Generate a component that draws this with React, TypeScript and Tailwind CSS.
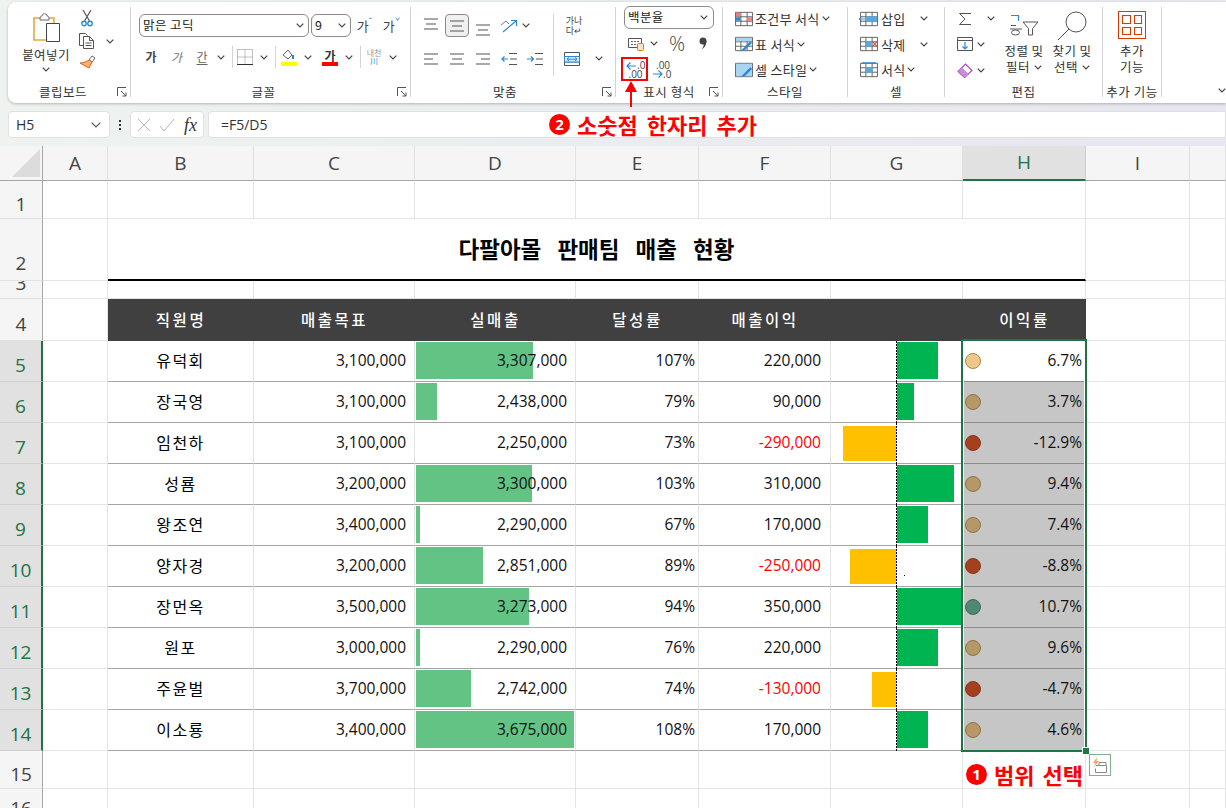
import type { ReactNode } from 'react'

const blue = '#2b88d8'

function Chev({ className = '' }: { className?: string }) {
  return (
    <svg width="8" height="5" viewBox="0 0 8 5" className={className}>
      <path d="M.7.7 4 4 7.3.7" fill="none" stroke="#444" strokeWidth="1.2" />
    </svg>
  )
}

function Slot({ w, children, className = '' }: { w: number; children?: ReactNode; className?: string }) {
  return (
    <div className={`flex items-center justify-center shrink-0 h-full ${className}`} style={{ width: w }}>
      {children}
    </div>
  )
}

function Launcher() {
  return (
    <svg width="10" height="10" viewBox="0 0 10 10" className="absolute right-[3px] bottom-[0px]">
      <path d="M.5 9V.5H9M4 4l5 5M9 5.500V9H5.500" fill="none" stroke="#555" strokeWidth="1" />
    </svg>
  )
}

function Group({ w, label, launcher, labelPr = 0, children }: { w: number; label: string; launcher?: boolean; labelPr?: number; children: ReactNode }) {
  return (
    <div className="relative flex flex-col shrink-0 h-[90px] border-r border-[#d4d4d4]" style={{ width: w }}>
      <div className="h-[78px]">{children}</div>
      <div className="h-[12px] leading-[14px] text-center text-[12.500px] tracking-[0.5px] text-[#333] whitespace-nowrap" style={{ paddingRight: labelPr }}>{label}</div>
      {launcher && <Launcher />}
    </div>
  )
}

function Lines({ ys, xs }: { ys: number[]; xs: [number, number][] }) {
  return (
    <svg width="18" height="20" viewBox="0 0 18 20">
      {ys.map((y, i) => (
        <path key={i} d={`M${xs[i][0]} ${y}H${xs[i][1]}`} stroke="#555" strokeWidth="1.1" />
      ))}
    </svg>
  )
}

function Indent({ right }: { right?: boolean }) {
  return (
    <svg width="16" height="14" viewBox="0 0 16 14">
      <path d="M8 1.500h8M9 7h7M8 12.500h8" stroke="#555" strokeWidth="1.1" />
      <path d={right ? 'M0 7h6M4 4.500 6.500 7 4 9.500' : 'M1 7h6M3.500 4.500 1 7l2.500 2.500'} fill="none" stroke={blue} strokeWidth="1.2" />
    </svg>
  )
}

function MenuRow({ icon, label, chevW, iconW, pl, textW }: { icon: ReactNode; label: string; chevW?: number; iconW: number; pl: number; textW?: number }) {
  return (
    <div className="flex items-center h-[25.500px]" style={{ paddingLeft: pl }}>
      <Slot w={iconW}>{icon}</Slot>
      <span className="text-[13px] tracking-[0.3px] leading-none text-[#333] whitespace-nowrap" style={textW ? { width: textW } : undefined}>{label}</span>
      {chevW !== undefined && <Slot w={chevW}><Chev /></Slot>}
    </div>
  )
}

function GridIcon({ children }: { children?: ReactNode }) {
  return (
    <svg width="20" height="16" viewBox="0 0 22 18">
      <path d="M1.500 1.500h19v15h-19zM1.500 6.500h19M1.500 11.500h19M7.500 1.500v15M14.500 1.500v15" fill="none" stroke="#555" strokeWidth="1" />
      {children}
    </svg>
  )
}

function Ribbon() {
  return (
    <div className="flex ml-2 h-[101px] pt-[5px] rounded-l-lg bg-white shadow-[0_1px_3px_rgba(0,0,0,0.25)] overflow-hidden">
      <Group w={123} label="클립보드" launcher labelPr={12}>
        <div className="flex pl-[14px]">
          <div className="flex flex-col items-center w-[48px]">
            <svg width="30" height="30" viewBox="0 0 30 30" className="mt-[5px]">
              <path d="M3 6h20v22H3z" fill="#fff" stroke="#e9a63f" strokeWidth="1.6" />
              <path d="M9 6c0-2 2-2 2-2 0-3 5-3 5 0 0 0 2 0 2 2v2H9z" fill="#fff" stroke="#666" strokeWidth="1" />
              <path d="M15.500 11.500h13v18h-13z" fill="#fff" stroke="#444" strokeWidth="1" />
            </svg>
            <span className="mt-[5px] text-[12.500px] tracking-[0.4px] leading-[16px] text-[#333] whitespace-nowrap">붙여넣기</span>
            <Chev className="mt-[4px]" />
          </div>
          <div className="flex flex-col items-start w-[54px]">
            <Slot w={34} className="!h-[17px] mt-[3px]">
              <svg width="12" height="17" viewBox="0 0 12 17">
                <path d="M2 0l6.500 11M10 0 3.500 11" stroke="#555" strokeWidth="1.2" />
                <circle cx="3" cy="13.500" r="2.200" fill="none" stroke={blue} strokeWidth="1.400" />
                <circle cx="9" cy="13.500" r="2.200" fill="none" stroke={blue} strokeWidth="1.400" />
              </svg>
            </Slot>
            <div className="flex items-center mt-[6px] w-[54px]">
              <Slot w={34}>
                <svg width="16" height="16" viewBox="0 0 16 16">
                  <path d="M4.500 12.500H.5V.5h6l2 2" fill="none" stroke="#555" />
                  <path d="M4.500 3.500h6l4 4v8h-10z M10.500 3.500v4h4M6.500 10h6M6.500 12.500h6" fill="#fff" stroke="#555" />
                </svg>
              </Slot>
              <Slot w={12}><Chev /></Slot>
            </div>
            <Slot w={34} className="!h-[16px] mt-[5px]">
              <svg width="17" height="16" viewBox="0 0 17 16">
                <path d="M10 6l3-4 3 2-3 4z" fill="none" stroke="#666" />
                <path d="M10 6l3 2-3 6-9-5c3 0 6-1 9-3z" fill="#f6b26b" stroke="#d9641e" />
              </svg>
            </Slot>
          </div>
        </div>
      </Group>

      <Group w={280} label="글꼴" launcher labelPr={14}>
        <div className="pl-[8px] pt-[7px]">
          <div className="flex items-center h-[23px]">
            <div className="flex items-center justify-between w-[170px] h-[23px] pl-[3px] pr-[4px] border border-[#8a8a8a] rounded-md text-[12.500px] tracking-[0.4px] text-[#222]">
              <span>맑은 고딕</span>
              <Chev />
            </div>
            <div className="flex items-center justify-between w-[40px] h-[23px] ml-[2px] pl-[3px] pr-[4px] border border-[#8a8a8a] rounded-md text-[12.500px] text-[#222]">
              <span>9</span>
              <Chev />
            </div>
            <Slot w={27} className="text-[13px] text-[#444]">가<span className="text-[9px] text-[#2b88d8] -mt-[7px]">ˆ</span></Slot>
            <Slot w={27} className="text-[13px] text-[#444]">가<span className="text-[9px] text-[#2b88d8] -mt-[7px]">ˇ</span></Slot>
          </div>
          <div className="flex items-center h-[24px] mt-[8px] text-[12px] text-[#444]">
            <Slot w={24} className="font-bold">가</Slot>
            <Slot w={27} className="italic text-[#777]">가</Slot>
            <Slot w={24}><span className="underline underline-offset-2 text-[#666]">간</span></Slot>
            <Slot w={14}><Chev /></Slot>
            <div className="w-px h-[22px] ml-[4px] bg-[#d4d4d4]" />
            <Slot w={24}>
              <svg width="16" height="16" viewBox="0 0 16 16">
                <path d="M.5.5h15M.5 8h15M8 .5v15M.5.5v15M15.500.5v15" fill="none" stroke="#888" strokeDasharray="1 1" />
                <path d="M0 15.500h16" stroke="#333" />
              </svg>
            </Slot>
            <Slot w={14}><Chev /></Slot>
            <div className="w-px h-[22px] ml-[4px] bg-[#d4d4d4]" />
            <Slot w={26}>
              <svg width="16" height="18" viewBox="0 0 16 18">
                <path d="M2 7l5-5 4 5-4 4z" fill="#fff" stroke="#666" />
                <path d="M12 11V7" stroke={blue} strokeWidth="2" />
                <path d="M0 14h16v4H0z" fill="#ffff00" />
              </svg>
            </Slot>
            <Slot w={12}><Chev /></Slot>
            <Slot w={4} />
            <Slot w={24}>
              <div className="flex flex-col items-center leading-[13px] font-bold text-[#333]">
                가
                <div className="w-[16px] h-[4px] bg-[#ff0000]" />
              </div>
            </Slot>
            <Slot w={14}><Chev /></Slot>
            <div className="w-px h-[22px] ml-[4px] bg-[#d4d4d4]" />
            <Slot w={26} className="flex-col text-[8px] leading-[8px] text-[#999]">
              내천
              <span className="text-[#2b88d8]">川</span>
            </Slot>
            <Slot w={12}><Chev /></Slot>
          </div>
        </div>
      </Group>

      <Group w={205} label="맞춤" launcher labelPr={16}>
        <div className="flex pl-[7px] pt-[7px]">
          <div>
            <div className="flex items-center h-[23px]">
              <Slot w={26}><Lines ys={[3, 8, 13]} xs={[[2, 16], [4, 14], [2, 16]]} /></Slot>
              <Slot w={26}>
                <div className="flex items-center justify-center w-[24px] h-[23px] rounded bg-[#f0f0f0] border border-[#8a8a8a]">
                  <Lines ys={[5, 10, 15]} xs={[[2, 16], [4, 14], [2, 16]]} />
                </div>
              </Slot>
              <Slot w={26}><Lines ys={[9, 14, 19]} xs={[[2, 16], [4, 14], [2, 16]]} /></Slot>
              <Slot w={26}>
                <svg width="18" height="14" viewBox="0 0 18 14">
                  <path d="M1 6l5-4 3 3" fill="none" stroke="#777" />
                  <path d="M3 13 16 2M11 1.500h5.500V7" fill="none" stroke={blue} strokeWidth="1.2" />
                </svg>
              </Slot>
              <Slot w={8}><Chev /></Slot>
            </div>
            <div className="flex items-center h-[23px] mt-[10px]">
              <Slot w={26}><Lines ys={[5, 10, 15]} xs={[[2, 16], [2, 11], [2, 16]]} /></Slot>
              <Slot w={26}><Lines ys={[5, 10, 15]} xs={[[2, 16], [4, 14], [2, 16]]} /></Slot>
              <Slot w={26}><Lines ys={[5, 10, 15]} xs={[[2, 16], [7, 16], [2, 16]]} /></Slot>
              <Slot w={26}><Indent /></Slot>
              <Slot w={26}><Indent right /></Slot>
            </div>
          </div>
          <div className="w-px h-[62px] ml-[5px] bg-[#d4d4d4]" />
          <div className="flex flex-col pl-[10px]">
            <div className="flex items-center justify-center w-[18px] h-[23px] ml-[1px] text-[9px] leading-[10px] text-[#444] text-center">가나<br />다↵</div>
            <div className="flex items-center h-[23px] mt-[10px]">
              <svg width="16" height="14" viewBox="0 0 16 14">
                <path d="M.5.5h15v13H.5zM.5 4.500h15M.5 10h15" fill="#fff" stroke="#555" />
                <path d="M.5 4.500h15V10H.5z" fill="#d6ecfa" stroke={blue} />
                <path d="M3 7.200h10M5 5.400 3 7.200 5 9M11 5.400l2 1.800L11 9" fill="none" stroke={blue} />
              </svg>
              <Chev className="ml-[15px]" />
            </div>
          </div>
        </div>
      </Group>

      <Group w={107} label="표시 형식" launcher>
        <div className="pl-[8px]">
          <div className="flex items-center justify-between w-[90px] h-[23px] pl-[3px] pr-[5px] border border-[#8a8a8a] rounded-md text-[12.500px] tracking-[0.4px] text-[#222] -mt-[1px]">
            <span>백분율</span>
            <Chev />
          </div>
          <div className="flex items-center h-[25px] mt-[2px]">
            <Slot w={24}>
              <svg width="16" height="14" viewBox="0 0 16 14">
                <path d="M.5 1.500h13v9H.5z" fill="#fff" stroke="#555" />
                <path d="M3 4.500h8M3 7.500h8" stroke="#666" strokeDasharray="2 1" />
                <rect x="9.500" y="6.500" width="6" height="7" rx="1" fill="#fde3c4" stroke="#e07b1a" />
              </svg>
            </Slot>
            <Slot w={12}><Chev /></Slot>
            <Slot w={34} className="text-[20px] font-light text-[#444] font-['Open_Sans',sans-serif]">%</Slot>
            <Slot w={18}>
              <svg width="8" height="13" viewBox="0 0 8 13">
                <circle cx="4" cy="4" r="3.500" fill="#444" />
                <path d="M7.500 4c0 4-2 7-5 8.500C4.500 10 5 8 4.500 7z" fill="#444" />
              </svg>
            </Slot>
          </div>
          <div className="flex items-center h-[25px] mt-[1px]">
            <Slot w={24}>
              <svg width="20" height="19" viewBox="0 0 20 19">
                <path d="M1 6h9M4.500 2.500 1 6l3.500 3.500" fill="none" stroke={blue} strokeWidth="1.2" />
                <text x="11" y="9" fontSize="10" fill="#444" fontFamily="Open Sans">.0</text>
                <text x="2.500" y="18" fontSize="10" fill="#444" fontFamily="Open Sans">.00</text>
              </svg>
            </Slot>
            <Slot w={2} />
            <Slot w={24}>
              <svg width="20" height="19" viewBox="0 0 20 19">
                <text x="4" y="9" fontSize="10" fill="#444" fontFamily="Open Sans">.00</text>
                <path d="M1 14h9M6.500 10.500 10 14l-3.500 3.500" fill="none" stroke={blue} strokeWidth="1.2" />
                <text x="11" y="18" fontSize="10" fill="#444" fontFamily="Open Sans">.0</text>
              </svg>
            </Slot>
          </div>
        </div>
      </Group>

      <Group w={125} label="스타일">
        <div className="-mt-[1px]">
          <MenuRow pl={10} iconW={22} label="조건부 서식" chevW={12} icon={<GridIcon><path d="M2 2h5v4H2zM15 7h5v4h-5z" fill="#f47c7c" /><path d="M2 7h5v4H2z" fill={blue} /></GridIcon>} />
          <MenuRow pl={10} iconW={22} label="표 서식" chevW={12} icon={<GridIcon><path d="M2 2h18v4H2z" fill="#a9d4f2" /><path d="M8 16l10-10 2 2-9 9z" fill={blue} /></GridIcon>} />
          <MenuRow pl={10} iconW={22} label="셀 스타일" chevW={12} icon={<GridIcon><path d="M2 2h18v14H2z" fill="#a9d4f2" /><path d="M8 16l10-10 2 2-9 9z" fill={blue} /></GridIcon>} />
        </div>
      </Group>

      <Group w={97} label="셀">
        <div className="-mt-[1px]">
          <MenuRow pl={9} iconW={24} label="삽입" textW={39} chevW={8} icon={<GridIcon><path d="M8 6h12v6H8z" fill="#5ba7e0" /><path d="M0 9h8M3 6 0 9l3 3" fill="none" stroke={blue} /></GridIcon>} />
          <MenuRow pl={9} iconW={24} label="삭제" textW={39} chevW={8} icon={<GridIcon><path d="M7 6h7v6H7z" fill="#5ba7e0" /><path d="M15 6l5 6M20 6l-5 6" stroke="#e8503a" strokeWidth="1.200" /></GridIcon>} />
          <MenuRow pl={9} iconW={24} label="서식" textW={26} chevW={8} icon={<GridIcon><path d="M7 6h8v6H7z" fill="#5ba7e0" /><path d="M3 1h16" stroke={blue} strokeWidth="1.500" /></GridIcon>} />
        </div>
      </Group>

      <Group w={158} label="편집">
        <div className="flex pl-[8px]">
          <div className="w-[48px] -mt-[1px]">
            <div className="flex items-center h-[25px]">
              <Slot w={24} className="text-[#555]">
                <svg width="14" height="14" viewBox="0 0 14 14"><path d="M13 1.500H1.500L7 7l-5.500 5.500H13" fill="none" stroke="#555" /></svg>
              </Slot>
              <Slot w={22} className="pl-[5px]"><Chev /></Slot>
            </div>
            <div className="flex items-center h-[26px]">
              <Slot w={24}>
                <svg width="16" height="14" viewBox="0 0 16 14">
                  <path d="M.5.5h15v13H.5zM.5 3.500h15" fill="#fff" stroke="#555" />
                  <path d="M8 5v7M5.500 9.500 8 12l2.500-2.500" fill="none" stroke={blue} strokeWidth="1.200" />
                </svg>
              </Slot>
              <Slot w={8}><Chev /></Slot>
            </div>
            <div className="flex items-center h-[26px]">
              <Slot w={24}>
                <svg width="16" height="15" viewBox="0 0 16 15">
                  <path d="M1 8.500 8.500 1 15 7.500 7.500 14.500z" fill="#fff" stroke="#a64fb8" strokeWidth="1.200" />
                  <path d="M1 8.500 5 4.500 11.500 11 7.500 14.500z" fill="#c98ad6" />
                </svg>
              </Slot>
              <Slot w={8}><Chev /></Slot>
            </div>
          </div>
          <div className="flex flex-col items-center w-[48px] ml-[-1px]">
            <svg width="30" height="22" viewBox="0 0 30 22" className="mt-[7px]">
              <path d="M2 1.500h7.500V7" fill="none" stroke={blue} strokeWidth="1.200" />
              <path d="M7 11.500h-5M1 15h12" fill="none" stroke="#555" />
              <ellipse cx="6.500" cy="18.500" rx="4" ry="2.500" fill="none" stroke="#555" />
              <path d="M14 8h15l-5.500 6.500V21h-4v-6.500z" fill="#fff" stroke="#555" />
            </svg>
            <span className="mt-[7px] text-[12.500px] tracking-[0.4px] leading-[16px] text-[#333] whitespace-nowrap">정렬 및</span>
            <span className="flex items-center gap-[4px] text-[12.500px] tracking-[0.4px] leading-[16px] text-[#333] whitespace-nowrap">필터<Chev /></span>
          </div>
          <div className="flex flex-col items-center w-[48px]">
            <svg width="30" height="30" viewBox="0 0 30 30" className="mt-[4px]">
              <circle cx="19" cy="11" r="10" fill="#fff" stroke="#555" />
              <path d="M12 18 1 29" stroke="#555" />
            </svg>
            <span className="mt-[2px] text-[12.500px] tracking-[0.4px] leading-[16px] text-[#333] whitespace-nowrap">찾기 및</span>
            <span className="flex items-center gap-[4px] text-[12.500px] tracking-[0.4px] leading-[16px] text-[#333] whitespace-nowrap">선택<Chev /></span>
          </div>
        </div>
      </Group>

      <Group w={59} label="추가 기능">
        <div className="flex flex-col items-center">
          <div className="grid grid-cols-2 gap-[3px] w-[28px] h-[28px] mt-[4px] p-[3px] border border-[#d83b01]">
            <div className="border border-[#d83b01]" />
            <div className="border border-[#d83b01]" />
            <div className="border border-[#d83b01]" />
            <div className="border border-[#d83b01]" />
          </div>
          <span className="mt-[4px] text-[12.500px] tracking-[0.4px] leading-[16px] text-[#333]">추가</span>
          <span className="text-[12.500px] tracking-[0.4px] leading-[16px] text-[#333]">기능</span>
        </div>
      </Group>

      <div className="flex flex-1 items-end justify-end pr-[0px] pb-[10px]">
        <Chev />
      </div>
    </div>
  )
}

function FormulaBar() {
  return (
    <div className="flex items-center h-[27px] mt-[8px] ml-2">
      <div className="flex items-center justify-between w-[102px] h-[27px] pl-[7px] pr-[8px] bg-white rounded border border-[#e0e0e0] text-[14px] text-[#333] font-['Open_Sans',sans-serif]">
        H5
        <svg width="10" height="6" viewBox="0 0 10 6"><path d="M.7.7 5 5 9.300.7" fill="none" stroke="#555" strokeWidth="1.200" /></svg>
      </div>
      <div className="flex flex-col items-center justify-center gap-[2px] w-[20px] h-[27px]">
        <div className="w-[2px] h-[2px] bg-[#333]" />
        <div className="w-[2px] h-[2px] bg-[#333]" />
        <div className="w-[2px] h-[2px] bg-[#333]" />
      </div>
      <div className="flex items-center w-[74px] h-[27px] pl-[6px] bg-white rounded border border-[#e0e0e0]">
        <svg width="14" height="14" viewBox="0 0 14 14"><path d="M1 1l12 12M13 1 1 13" stroke="#bbb" /></svg>
        <svg width="16" height="14" viewBox="0 0 16 14" className="ml-[8px]"><path d="M1 8l4 5L15 1" fill="none" stroke="#bbb" /></svg>
        <span className="ml-[9px] text-[18px] leading-none italic text-[#333] font-['Liberation_Serif',serif]">fx</span>
      </div>
      <div className="flex items-center flex-1 h-[27px] ml-[4px] pl-[12px] bg-white rounded-l border border-[#e0e0e0] text-[14px] text-[#333] font-['Open_Sans',sans-serif]">
        =F5/D5
      </div>
    </div>
  )
}

const numFont = "font-['Open_Sans','Noto_Sans_CJK_KR',sans-serif]"
const line = 'border-r border-b border-[#e4e4e4]'
const colNames = ['A', 'B', 'C', 'D', 'E', 'F', 'G', 'H', 'I', '']

type Row = {
  n: number
  name: string
  goal: string
  sales: string
  bar: number
  rate: string
  profit: string
  neg?: boolean
  gbar: number
  yellow?: boolean
  pct: string
  dot: string
}

const rows: Row[] = [
  { n: 5, name: '유덕회', goal: '3,100,000', sales: '3,307,000', bar: 117, rate: '107%', profit: '220,000', gbar: 41, pct: '6.7%', dot: 'bg-[#f0c78a] border-[#ad8a45]' },
  { n: 6, name: '장국영', goal: '3,100,000', sales: '2,438,000', bar: 21, rate: '79%', profit: '90,000', gbar: 17, pct: '3.7%', dot: 'bg-[#b59768] border-[#8f7445]' },
  { n: 7, name: '임천하', goal: '3,100,000', sales: '2,250,000', bar: 0, rate: '73%', profit: '-290,000', neg: true, gbar: 53, yellow: true, pct: '-12.9%', dot: 'bg-[#a5401f] border-[#84371e]' },
  { n: 8, name: '성룜', goal: '3,200,000', sales: '3,300,000', bar: 116, rate: '103%', profit: '310,000', gbar: 57, pct: '9.4%', dot: 'bg-[#b59768] border-[#8f7445]' },
  { n: 9, name: '왕조연', goal: '3,400,000', sales: '2,290,000', bar: 4, rate: '67%', profit: '170,000', gbar: 31, pct: '7.4%', dot: 'bg-[#b59768] border-[#8f7445]' },
  { n: 10, name: '양자경', goal: '3,200,000', sales: '2,851,000', bar: 67, rate: '89%', profit: '-250,000', neg: true, gbar: 46, yellow: true, pct: '-8.8%', dot: 'bg-[#a5401f] border-[#84371e]' },
  { n: 11, name: '장먼옥', goal: '3,500,000', sales: '3,273,000', bar: 113, rate: '94%', profit: '350,000', gbar: 65, pct: '10.7%', dot: 'bg-[#4f8774] border-[#3f6c5c]' },
  { n: 12, name: '원포', goal: '3,000,000', sales: '2,290,000', bar: 4, rate: '76%', profit: '220,000', gbar: 41, pct: '9.6%', dot: 'bg-[#b59768] border-[#8f7445]' },
  { n: 13, name: '주윤벌', goal: '3,700,000', sales: '2,742,000', bar: 55, rate: '74%', profit: '-130,000', neg: true, gbar: 24, yellow: true, pct: '-4.7%', dot: 'bg-[#a5401f] border-[#84371e]' },
  { n: 14, name: '이소룡', goal: '3,400,000', sales: '3,675,000', bar: 158, rate: '108%', profit: '170,000', gbar: 31, pct: '4.6%', dot: 'bg-[#b59768] border-[#8f7445]' },
]

function RowHead({ n, selected, children }: { n?: number; selected?: boolean; children?: ReactNode }) {
  return (
    <div
      className={`flex justify-center items-center pt-[9px] overflow-hidden text-[19px] ${numFont} ${
        selected
          ? 'bg-[#e1e1e1] text-[#217346] border-r-2 border-r-[#217346] border-b border-b-[#cfcfcf]'
          : 'bg-[#f5f5f5] text-[#444] border-r border-r-[#a6a6a6] border-b border-b-[#e1e1e1]'
      }`}
    >
      {children ?? n}
    </div>
  )
}

function Blank({ count }: { count: number }) {
  return (
    <>
      {Array.from({ length: count }).map((_, i) => (
        <div key={i} className={line} />
      ))}
    </>
  )
}

function DataRow({ r }: { r: Row }) {
  const cell = 'flex items-center border-r border-r-[#e4e4e4] border-b border-b-[#a6a6a6] text-[15.500px] text-[#111]'
  return (
    <>
      <RowHead n={r.n} selected />
      <div className={line} />
      <div className={`${cell} justify-center pb-[3px] text-[16px] tracking-[1.500px] text-black`}>{r.name}</div>
      <div className={`${cell} justify-end pr-[8px] ${numFont}`}>{r.goal}</div>
      <div className={`${cell} relative justify-end pr-[8px] ${numFont}`}>
        {r.bar > 0 && <div className="absolute left-px top-px bottom-[2px] bg-[#63c384]" style={{ width: r.bar }} />}
        <span className="relative">{r.sales}</span>
      </div>
      <div className={`${cell} justify-end pr-[3px] ${numFont}`}>{r.rate}</div>
      <div className={`${cell} justify-end pr-[9px] ${numFont} ${r.neg ? 'text-[#ff0000]' : ''}`}>{r.profit}</div>
      <div className={`${cell} relative`}>
        {r.yellow ? (
          <div className="absolute right-[66px] top-[3px] bottom-[2px] bg-[#ffc000]" style={{ width: r.gbar }} />
        ) : (
          <div className="absolute left-[66px] top-px bottom-[2px] bg-[#00b551]" style={{ width: r.gbar }} />
        )}
        <div className="absolute left-[65px] top-0 -bottom-px w-px bg-[repeating-linear-gradient(to_bottom,#000_0px,#000_2px,transparent_2px,transparent_3px)]" />
        {r.n === 10 && <div className="absolute left-[73px] top-[29px] w-px h-px bg-black" />}
      </div>
      <div className="border-r border-r-[#e4e4e4] px-px bg-white">
        <div className={`flex items-center justify-between h-full pl-[1px] pr-[2px] text-[15.500px] text-[#111] border-b border-b-[#8c8c8c] ${numFont} ${r.n === 5 ? 'bg-white' : 'bg-[#c6c6c6]'}`}>
          <div className={`w-[16px] h-[16px] rounded-full border ${r.dot}`} />
          {r.pct}
        </div>
      </div>
      <Blank count={2} />
    </>
  )
}

function Sheet() {
  const headCell = 'flex items-center justify-center bg-[#404040] text-white text-[15.500px] tracking-[2.500px] font-medium'
  return (
    <div className="relative mt-[8px] grid grid-cols-[43px_65px_146px_161px_161px_123px_132px_132px_123px_104px_36px] grid-rows-[35px_38px_62px_18px_42px_repeat(10,41px)_38px_30px] bg-white">
      <div className="flex items-end justify-end pr-[2px] pb-[3px] bg-[#f5f5f5] border-r border-b border-[#a6a6a6]">
        <svg width="28" height="28" viewBox="0 0 28 28"><path d="M28 0v28H0z" fill="#dcdcdc" /></svg>
      </div>
      {colNames.map((c, i) => (
        <div
          key={i}
          className={`flex items-center justify-center text-[19px] ${numFont} ${
            c === 'H'
              ? 'bg-[#e1e1e1] text-[#217346] border-b-2 border-b-[#217346] border-r border-r-[#cfcfcf]'
              : 'bg-[#f5f5f5] text-[#444] border-b border-b-[#a6a6a6] border-r border-r-[#e1e1e1]'
          }`}
        >
          {c}
        </div>
      ))}

      <RowHead n={1} />
      <Blank count={10} />

      <RowHead>
        <span className="pt-[18px]">2</span>
      </RowHead>
      <div className={line} />
      <div className="col-span-7 flex items-center justify-center pt-[1px] pb-[2px] border-b-2 border-b-black border-r border-r-[#e4e4e4] text-[22.500px] [word-spacing:11px] font-bold text-black">
        다팔아몰 판매팀 매출 현황
      </div>
      <Blank count={2} />

      <RowHead>
        <span className="-mt-[21px]">3</span>
      </RowHead>
      <Blank count={10} />

      <RowHead n={4} />
      <div className={line} />
      <div className={headCell}>직원명</div>
      <div className={headCell}>매출목표</div>
      <div className={headCell}>실매출</div>
      <div className={headCell}>달성률</div>
      <div className={headCell}>매출이익</div>
      <div className={headCell} />
      <div className={headCell}>이익률</div>
      <Blank count={2} />

      {rows.map((r) => (
        <DataRow key={r.n} r={r} />
      ))}

      <RowHead n={15} />
      <Blank count={10} />
      <RowHead n={16} />
      <Blank count={10} />

      {/* selection box over H5:H14 */}
      <div className="absolute left-[961px] top-[193px] w-[126px] h-[413px] border-2 border-[#217346] pointer-events-none" />
      <div className="absolute left-[1083px] top-[602px] w-[6px] h-[6px] bg-[#217346] outline outline-1 outline-white" />
      <div className="absolute left-[1089px] top-[608px] flex items-center justify-center w-[22px] h-[22px] bg-white border border-[#7fb08f]">
        <svg width="16" height="16" viewBox="0 0 16 16">
          <path d="M5 0 1 6h2.500L2 10l5-6H4.500z" fill="#f2a65a" />
          <path d="M7 5.500h7v3H7zM4 8.500h10M3.500 11.500v4h11v-7" fill="none" stroke="#888" />
        </svg>
      </div>
      <div className="absolute left-[966px] top-[615px] flex items-center gap-[7px] h-[26px] whitespace-nowrap text-[22px] [word-spacing:3px] font-bold text-[#ff0000]">
        <span className="flex items-center justify-center w-[21px] h-[21px] rounded-full bg-[#ff0000] text-white text-[15px] font-bold font-['Open_Sans',sans-serif]">1</span>
        범위 선택
      </div>
    </div>
  )
}

export default function App() {
  return (
    <div className="relative w-[1226px] h-[808px] overflow-hidden pt-[2px] bg-gradient-to-r from-[#eef3f0] to-[#e6e7ef] font-['Noto_Sans_CJK_KR','Noto_Sans',sans-serif]">
      <Ribbon />
      <FormulaBar />
      <Sheet />

      {/* callout on the ribbon */}
      <div className="absolute left-[621px] top-[57px] w-[27px] h-[24px] border-2 border-[#ff0000]" />
      <svg width="14" height="27" viewBox="0 0 14 27" className="absolute left-[624px] top-[81px]">
        <path d="M7 0l6 11H8v15H6V11H1z" fill="#ff0000" />
      </svg>
      <div className="absolute left-[549px] top-[111px] flex items-center gap-[7px] h-[26px] whitespace-nowrap text-[22px] [word-spacing:4px] font-bold text-[#ff0000]">
        <span className="flex items-center justify-center w-[21px] h-[21px] rounded-full bg-[#ff0000] text-white text-[15px] font-bold font-['Open_Sans',sans-serif]">2</span>
        소숫점 한자리 추가
      </div>
    </div>
  )
}
